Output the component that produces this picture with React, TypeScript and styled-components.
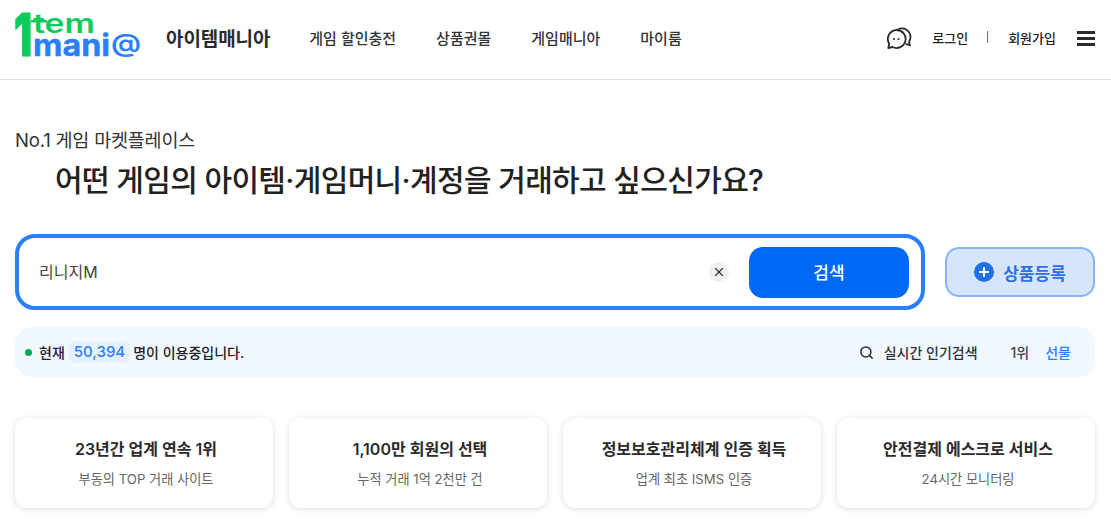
import styled, { createGlobalStyle } from 'styled-components'
import { Search, X } from 'lucide-react'

const GlobalStyle = createGlobalStyle`
  html, body {
    margin: 0;
    padding: 0;
    min-height: 100vh;
    background: #fff;
    overflow: hidden;
    font-family: Inter, "Noto Sans CJK KR", sans-serif;
    color: #222;
  }
  * { box-sizing: border-box; }
`

const Header = styled.header`
  height: 80px;
  border-bottom: 1px solid #ddd;
  display: flex;
  align-items: center;
  padding: 0 16px 5px 16px;
`

const LogoLink = styled.a`
  display: flex;
  align-items: center;
  margin-right: 39px;
`

const LogoSvg = styled.svg`
  display: block;
  overflow: visible;
  margin-bottom: 4px;
  font-family: Inter, sans-serif;
`

const SiteName = styled.span`
  font-size: 19px;
  font-weight: 600;
  color: #2b2b2b;
  margin-left: 25px;
  letter-spacing: -0.1px;
`

const Nav = styled.nav`
  display: flex;
  gap: 40px;
  flex: 1;
`

const NavItem = styled.a`
  font-size: 15px;
  font-weight: 500;
  color: #333;
`

const Utils = styled.div`
  display: flex;
  align-items: center;
`

const ChatSvg = styled.svg`
  display: block;
  margin: 2px 20px 0 0;
`

const UtilLink = styled.a`
  font-size: 13px;
  font-weight: 500;
  color: #222;
`

const UtilDivider = styled.span`
  width: 1px;
  height: 12px;
  background: #2a7fff;
  margin: 0 20px 0 19px;
`

const Burger = styled.button`
  width: 18px;
  height: 15px;
  margin: 3px 0 0 21px;
  padding: 0;
  border: 0;
  background: linear-gradient(#2b2b2b 3px, transparent 3px) 0 0 / 100% 6px;
`

const Main = styled.main`
  padding: 49px 16px 0 15px;
`

const Eyebrow = styled.p`
  margin: 0;
  font-size: 18.500px;
  line-height: 22px;
  font-weight: 400;
  color: #333;
  letter-spacing: -0.2px;
`

const Headline = styled.h1`
  margin: 9px 0 0 40px;
  font-size: 30px;
  line-height: 40px;
  font-weight: 500;
  color: #222;
  letter-spacing: -0.65px;
`

const SearchRow = styled.div`
  display: flex;
  align-items: center;
  gap: 20px;
  margin-top: 34px;
`

const SearchBox = styled.div`
  width: 910px;
  height: 76px;
  border: 4px solid #2a7fff;
  border-radius: 20px;
  display: flex;
  align-items: center;
  padding: 0 12px 2px 20px;
`

const SearchValue = styled.span`
  flex: 1;
  font-size: 16px;
  color: #444;
`

const ClearButton = styled.span`
  width: 20px;
  height: 20px;
  border-radius: 50%;
  background: #f0f0f0;
  color: #333;
  display: flex;
  align-items: center;
  justify-content: center;
  margin: 2px 20px 0 0;
`

const SearchButton = styled.button`
  width: 160px;
  height: 51px;
  margin-top: 2px;
  padding: 0 0 2px;
  border: 0;
  border-radius: 14px;
  background: #0068f5;
  color: #fff;
  font: inherit;
  font-size: 17px;
  font-weight: 500;
`

const RegisterButton = styled.button`
  width: 150px;
  height: 50px;
  padding: 0;
  border: 2px solid #8ab4fb;
  border-radius: 14px;
  background: #d5e5fd;
  color: #2f6fe0;
  font: inherit;
  font-size: 17px;
  font-weight: 600;
  display: flex;
  align-items: center;
  justify-content: center;
  gap: 9px;
`

const PlusCircle = styled.span`
  width: 20px;
  height: 20px;
  border-radius: 50%;
  background: #1f6fe8;
  position: relative;
  &::before, &::after {
    content: '';
    position: absolute;
    background: #fff;
    left: 5px;
    top: 9px;
    width: 10px;
    height: 2px;
  }
  &::after {
    left: 9px;
    top: 5px;
    width: 2px;
    height: 10px;
  }
`

const InfoBar = styled.div`
  height: 50px;
  margin-top: 17px;
  padding: 0 24px 0 10px;
  border-radius: 16px;
  background: #f2f8ff;
  display: flex;
  align-items: center;
  justify-content: space-between;
`

const Status = styled.div`
  display: flex;
  align-items: center;
  font-size: 14px;
  font-weight: 500;
  color: #222;
`

const GreenDot = styled.span`
  width: 7px;
  height: 7px;
  border-radius: 50%;
  background: #0fa958;
  margin-right: 7px;
`

const CountBadge = styled.span`
  margin: 0 3px 0 4px;
  padding: 0 5px;
  height: 22px;
  line-height: 22px;
  border-radius: 5px;
  background: #e6f1ff;
  color: #2a7fff;
  font-size: 15px;
  font-weight: 500;
`

const Trending = styled.div`
  display: flex;
  align-items: center;
  font-size: 14px;
  font-weight: 500;
  color: #333;
`

const TrendingLabel = styled.span`
  margin: 0 33px 0 10px;
`

const TrendingRank = styled.span`
  margin-right: 16px;
  color: #444;
`

const TrendingWord = styled.a`
  color: #2a7fff;
`

const Cards = styled.section`
  display: grid;
  grid-template-columns: repeat(4, 1fr);
  gap: 16px;
  margin-top: 41px;
`

const Card = styled.article`
  height: 90px;
  border-radius: 12px;
  background: #fff;
  box-shadow: 0 1px 6px rgba(0, 0, 0, 0.14);
  display: flex;
  flex-direction: column;
  align-items: center;
  padding: 20px 0 0 4px;
`

const CardTitle = styled.h3`
  margin: 0;
  font-size: 16px;
  line-height: 22px;
  font-weight: 600;
  color: #2b2b2b;
`

const CardText = styled.p`
  margin: 10px 0 0;
  font-size: 13.200px;
  line-height: 18px;
  color: #666;
`

function Logo() {
  return (
    <LogoSvg width="125" height="44" viewBox="0 0 125 44">
      <text x="-2" y="43" fontSize="59" fontWeight="900" fill="#0acb5b" stroke="#0acb5b" strokeWidth="1" textLength="18" lengthAdjust="spacingAndGlyphs">
        1
      </text>
      <rect x="15" y="7" width="16" height="2.500" fill="#0acb5b" />
      <text x="17" y="20" fontSize="26" fontWeight="600" fill="#0acb5b" textLength="62" lengthAdjust="spacingAndGlyphs">
        tem
      </text>
      <text x="17" y="43" fontSize="30" fontWeight="700" fill="#2a7fff" stroke="#2a7fff" strokeWidth="0.4" textLength="77" lengthAdjust="spacingAndGlyphs">
        mani
      </text>
      <text x="95" y="39" fontSize="25" fontWeight="600" fill="#2a7fff" textLength="30" lengthAdjust="spacingAndGlyphs">
        @
      </text>
    </LogoSvg>
  )
}

function ChatIcon() {
  return (
    <ChatSvg width="26" height="22" viewBox="0 0 26 22" fill="none" stroke="#2b2b2b" strokeWidth="1.800">
      <path d="M12 2.500a8.500 8.500 0 0 1 12.500 7.500c0 1.800-.5 3.400-1.400 4.800l.7 3.400-3.400-1.100" strokeLinecap="round" />
      <path d="M10.500 3a9 9 0 1 1-4 17l-4.200 1 .9-4.300A9 9 0 0 1 10.500 3z" fill="#fff" strokeLinejoin="round" />
      <circle cx="8" cy="12" r="1.100" fill="#2b2b2b" stroke="none" />
      <circle cx="12.500" cy="12" r="1.100" fill="#2b2b2b" stroke="none" />
    </ChatSvg>
  )
}

const cards = [
  { title: '23년간 업계 연속 1위', text: '부동의 TOP 거래 사이트' },
  { title: '1,100만 회원의 선택', text: '누적 거래 1억 2천만 건' },
  { title: '정보보호관리체계 인증 획득', text: '업계 최초 ISMS 인증' },
  { title: '안전결제 에스크로 서비스', text: '24시간 모니터링' },
]

export default function App() {
  return (
    <>
      <GlobalStyle />
      <Header>
        <LogoLink>
          <Logo />
          <SiteName>아이템매니아</SiteName>
        </LogoLink>
        <Nav>
          <NavItem>게임 할인충전</NavItem>
          <NavItem>상품권몰</NavItem>
          <NavItem>게임매니아</NavItem>
          <NavItem>마이룸</NavItem>
        </Nav>
        <Utils>
          <ChatIcon />
          <UtilLink>로그인</UtilLink>
          <UtilDivider />
          <UtilLink>회원가입</UtilLink>
          <Burger aria-label="menu" />
        </Utils>
      </Header>
      <Main>
        <Eyebrow>No.1 게임 마켓플레이스</Eyebrow>
        <Headline>어떤 게임의 아이템·게임머니·계정을 거래하고 싶으신가요?</Headline>
        <SearchRow>
          <SearchBox>
            <SearchValue>리니지M</SearchValue>
            <ClearButton>
              <X size={14} strokeWidth={2} />
            </ClearButton>
            <SearchButton>검색</SearchButton>
          </SearchBox>
          <RegisterButton>
            <PlusCircle />
            상품등록
          </RegisterButton>
        </SearchRow>
        <InfoBar>
          <Status>
            <GreenDot />
            현재
            <CountBadge>50,394</CountBadge>
            명이 이용중입니다.
          </Status>
          <Trending>
            <Search size={15} strokeWidth={2.4} color="#2b2b2b" />
            <TrendingLabel>실시간 인기검색</TrendingLabel>
            <TrendingRank>1위</TrendingRank>
            <TrendingWord>선물</TrendingWord>
          </Trending>
        </InfoBar>
        <Cards>
          {cards.map((card) => (
            <Card key={card.title}>
              <CardTitle>{card.title}</CardTitle>
              <CardText>{card.text}</CardText>
            </Card>
          ))}
        </Cards>
      </Main>
    </>
  )
}
